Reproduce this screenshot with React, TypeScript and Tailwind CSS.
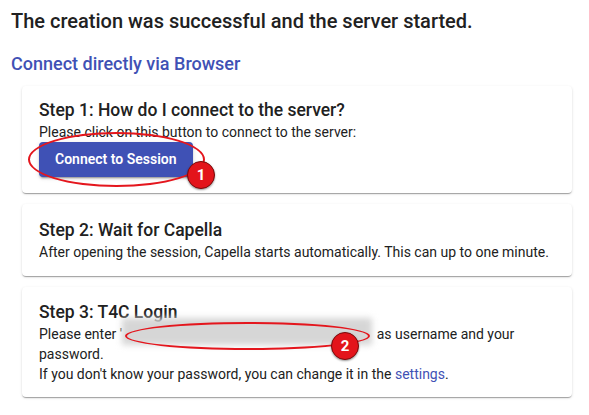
import React from "react";

function Badge({ n, className }: { n: number; className: string }) {
  return (
    <div
      className={
        "absolute w-[28px] h-[28px] rounded-full bg-[#e3141b] border-[1.5px] border-[#7a0a0a] shadow-[0_1px_2px_rgba(0,0,0,0.4)] flex items-center justify-center text-white text-[15px] font-bold leading-none " +
        className
      }
    >
      {n}
    </div>
  );
}

function Card({ className, children }: { className: string; children: React.ReactNode }) {
  return (
    <div
      className={
        "relative flex flex-col items-start bg-white rounded-[4px] px-[17px] shadow-[0_2px_1px_-1px_rgba(0,0,0,0.2),0_1px_1px_0_rgba(0,0,0,0.14),0_1px_3px_0_rgba(0,0,0,0.12)] " +
        className
      }
    >
      {children}
    </div>
  );
}

export default function App() {
  return (
    <div className="min-h-screen w-full bg-white px-[11px] pt-[5px] text-[#212121] font-['Roboto','Liberation_Sans',sans-serif] flex flex-col">
      <h2 className="text-[20px] font-medium leading-[32px]">
        The creation was successful and the server started.
      </h2>
      <div className="mt-[15px] text-[18px] font-medium leading-[24px] text-[#3f51b5]">
        Connect directly via Browser
      </div>

      <div className="ml-[11px] mr-[6px] mt-[10px] flex flex-col gap-[11px]">
        {/* step 1 */}
        <Card className="pt-[12px] pb-[16px]">
          <div className="text-[17.5px] font-medium leading-[24px]">Step 1: How do I connect to the server?</div>
          <div className="text-[14px] leading-[20px]">Please click on this button to connect to the server:</div>
          <button className="h-[35px] px-[16px] rounded-[4px] bg-[#3f51b5] text-white text-[14px] font-semibold shadow-[0_3px_1px_-2px_rgba(0,0,0,0.2),0_2px_2px_0_rgba(0,0,0,0.14),0_1px_5px_0_rgba(0,0,0,0.12)]">
            Connect to Session
          </button>
          <div className="absolute left-[6px] top-[46px] w-[177px] h-[55px] rounded-[50%] border-2 border-[#e4161d]" />
          <Badge n={1} className="left-[165px] top-[75px]" />
        </Card>

        {/* step 2 */}
        <Card className="pt-[14px] pb-[14px]">
          <div className="text-[17.5px] font-medium leading-[24px]">Step 2: Wait for Capella</div>
          <div className="text-[14px] leading-[20px]">
            After opening the session, Capella starts automatically. This can up to one minute.
          </div>
        </Card>

        {/* step 3 */}
        <Card className="pt-[13px] pb-[13px]">
          <div className="text-[17.5px] font-medium leading-[24px]">Step 3: T4C Login</div>
          <div className="text-[14px] leading-[20px]">
            Please enter '<span className="inline-block w-[251px] h-[1px]" /> as username and your password.
          </div>
          <div className="text-[14px] leading-[20px]">
            If you don't know your password, you can change it in the{" "}
            <span className="text-[#3f51b5]">settings</span>.
          </div>
          <div className="absolute left-[100px] top-[31px] w-[250px] h-[27px] bg-[#d6d6d6] blur-[3px]" />
          <div className="absolute left-[103px] top-[35px] w-[245px] h-[28px] rounded-[50%] border-2 border-[#e4161d]" />
          <Badge n={2} className="left-[309px] top-[45px]" />
        </Card>
      </div>
    </div>
  );
}
